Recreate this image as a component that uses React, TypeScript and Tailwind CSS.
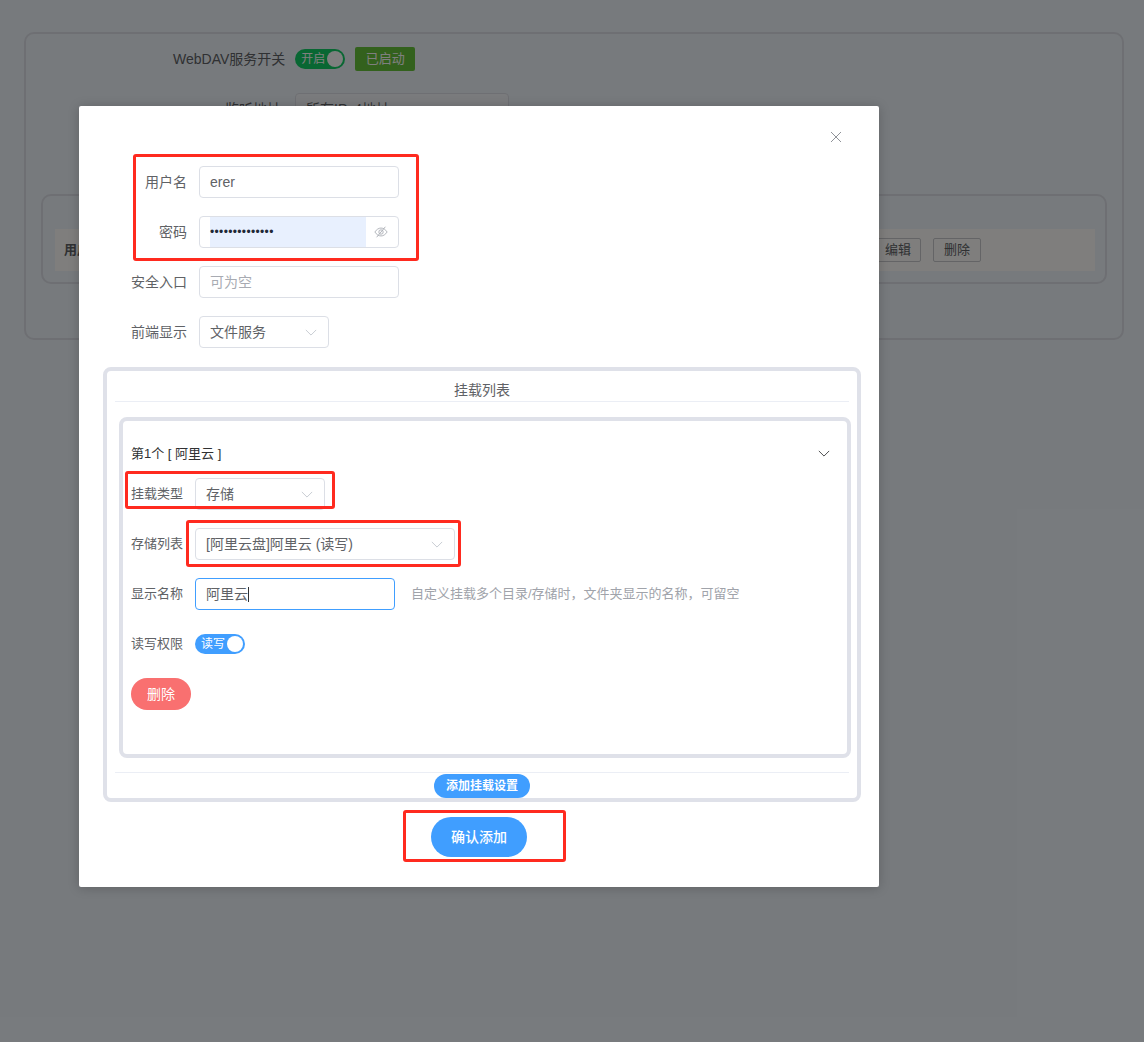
const FONT = "font-['Liberation_Sans','Noto_Sans_CJK_SC',sans-serif]";

const Chevron = ({ className = "" }: { className?: string }) => (
  <svg viewBox="0 0 14 8" className={"w-[12px] h-[7px] " + className} fill="none" stroke="currentColor" strokeWidth="1">
    <path d="M1 1l6 6 6-6" />
  </svg>
);

// red annotation drawn on top of the screenshot
const RedBox = ({ className }: { className: string }) => (
  <div className={"absolute border-[3px] border-[#ff2a1f] rounded-[3px] pointer-events-none " + className} />
);

const Switch = ({ label, color }: { label: string; color: string }) => (
  <div className={"w-[50px] h-[20px] rounded-full flex items-center pl-[6px] pr-[2px] justify-between text-[12px] text-white " + color}>
    <span>{label}</span>
    <span className="w-[16px] h-[16px] rounded-full bg-white" />
  </div>
);

const FormRow = ({ label, children }: { label: string; children: React.ReactNode }) => (
  <div className="flex items-center h-[32px] mb-[18px]">
    <label className="w-[96px] text-right pr-[12px] text-[14px] text-[#606266]">{label}</label>
    {children}
  </div>
);

const MountRow = ({ label, children, className = "" }: { label: string; children: React.ReactNode; className?: string }) => (
  <div className={"flex items-center h-[32px] " + className}>
    <label className="w-[64px] text-[13px] text-[#606266]">{label}</label>
    {children}
  </div>
);

const Select = ({ value, width }: { value: string; width: string }) => (
  <div className={"h-[32px] border border-[#dcdfe6] rounded-[4px] flex items-center justify-between pl-[10px] pr-[11px] text-[14px] text-[#606266] " + width}>
    <span>{value}</span>
    <Chevron className="text-[#c0c4cc]" />
  </div>
);

function Background() {
  return (
    <div className="pl-[24px] pt-[32px]">
      <div className="w-[1100px] h-[308px] border-2 border-[#dcdfe6] rounded-[10px] px-[15px]">
        <div className="flex items-center h-[50px] pl-[132px] text-[14px] text-[#606266]">
          <span className="mr-[10px]">WebDAV服务开关</span>
          <Switch label="开启" color="bg-[#13ce66]" />
          <span className="ml-[10px] w-[60px] h-[24px] rounded-[2px] bg-[#67c23a] text-white text-[13px] flex items-center justify-center">已启动</span>
        </div>
        <div className="flex items-center h-[32px] mt-[9px] pl-[184px] text-[14px] text-[#606266]">
          <span className="mr-[14px]">监听地址</span>
          <div className="w-[214px] h-[32px] border border-[#dcdfe6] bg-[#f5f7fa] rounded-[4px] pl-[10px] flex items-center">所有IPv4地址</div>
        </div>
        <div className="mt-[69px] h-[90px] border-2 border-[#dcdfe6] rounded-[10px] pl-[12px] pr-[10px] pt-[33px]">
          <div className="h-[42px] bg-[#fefdfb] flex items-center justify-between pl-[9px] pr-[114px] text-[13px] text-[#606266]">
            <b>用户名</b>
            <div className="flex gap-[12px]">
              <span className="w-[46px] h-[24px] border border-[#c8c9cc] rounded-[2px] flex items-center justify-center">编辑</span>
              <span className="w-[48px] h-[24px] border border-[#c8c9cc] rounded-[2px] flex items-center justify-center">删除</span>
            </div>
          </div>
        </div>
      </div>
    </div>
  );
}

function Dialog() {
  return (
    <div className="absolute left-[79px] top-[106px] w-[800px] h-[781px] bg-white rounded-[2px] shadow-[0_1px_12px_rgba(0,0,0,0.2)] pt-[60px] px-[24px] flex flex-col">
      <svg viewBox="0 0 12 12" className="absolute right-[37px] top-[25px] w-[12px] h-[12px] text-[#909399]" fill="none" stroke="currentColor" strokeWidth="1">
        <path d="M1 1l10 10M11 1L1 11" />
      </svg>

      <RedBox className="left-[54px] top-[48px] w-[286px] h-[107px]" />
      <RedBox className="left-[46px] top-[365px] w-[210px] h-[38px]" />
      <RedBox className="left-[107px] top-[414px] w-[275px] h-[47px]" />
      <RedBox className="left-[324px] top-[704px] w-[163px] h-[52px]" />

      <FormRow label="用户名">
        <div className="w-[200px] h-[32px] border border-[#dcdfe6] rounded-[4px] pl-[10px] flex items-center text-[14px] text-[#606266]">erer</div>
      </FormRow>
      <FormRow label="密码">
        <div className="w-[200px] h-[32px] border border-[#dcdfe6] rounded-[4px] flex items-center pl-[10px]">
          <div className="w-[156px] h-full bg-[#e8f0fe] flex items-center text-[12px] tracking-[0.35px] text-[#1f2937] leading-none">••••••••••••••</div>
          <svg viewBox="0 0 16 16" className="w-[14px] h-[14px] ml-[8px] text-[#a8abb2]" fill="none" stroke="currentColor" strokeWidth="1">
            <path d="M1 8c2-3 4.300-4.500 7-4.500S13 5 15 8c-2 3-4.300 4.500-7 4.500S3 11 1 8z" />
            <circle cx="8" cy="8" r="2.500" />
            <path d="M3 14L13 2" />
          </svg>
        </div>
      </FormRow>
      <FormRow label="安全入口">
        <div className="w-[200px] h-[32px] border border-[#dcdfe6] rounded-[4px] pl-[10px] flex items-center text-[14px] text-[#a8abb2]">可为空</div>
      </FormRow>
      <FormRow label="前端显示">
        <Select value="文件服务" width="w-[130px]" />
      </FormRow>

      <div className="mt-[1px] w-[758px] h-[435px] border-4 border-[#dfe1e9] rounded-[8px] px-[8px] pt-[8px]">
        <div className="h-[23px] text-center text-[14px] text-[#606266] border-b border-[#ebeef5] leading-[22px]">挂载列表</div>
        <div className="mt-[15px] h-[341px] w-[732px] ml-[4px] border-4 border-[#dfe1e9] rounded-[8px] px-[8px] pt-[16px] text-[#303133]">
          <div className="h-[41px] pb-[8px] flex items-center justify-between pr-[9px] text-[13px]">
            <span>第1个 [ 阿里云 ]</span>
            <Chevron className="text-[#303133] w-[10px] h-[6px]" />
          </div>
          <MountRow label="挂载类型">
            <Select value="存储" width="w-[130px]" />
          </MountRow>
          <MountRow label="存储列表" className="mt-[18px]">
            <Select value="[阿里云盘]阿里云 (读写)" width="w-[260px]" />
          </MountRow>
          <MountRow label="显示名称" className="mt-[18px]">
            <div className="w-[200px] h-[32px] border border-[#409eff] rounded-[4px] pl-[10px] flex items-center text-[14px] text-[#606266]">
              阿里云<span className="w-px h-[15px] bg-[#303133]" />
            </div>
            <span className="ml-[16px] text-[13px] text-[#a0a3aa]">自定义挂载多个目录/存储时，文件夹显示的名称，可留空</span>
          </MountRow>
          <MountRow label="读写权限" className="mt-[18px]">
            <Switch label="读写" color="bg-[#409eff]" />
          </MountRow>
          <div className="mt-[18px] w-[60px] h-[32px] rounded-full bg-[#f97070] text-white text-[14px] flex items-center justify-center">删除</div>
        </div>
        <div className="mt-[14px] border-t border-[#ebeef5] flex justify-center pt-[1px]">
          <div className="w-[96px] h-[24px] rounded-full bg-[#409eff] text-white text-[12px] font-bold flex items-center justify-center">添加挂载设置</div>
        </div>
      </div>

      <div className="w-[96px] h-[40px] mt-[15px] ml-[328px] rounded-full bg-[#409eff] text-white text-[14px] font-medium flex items-center justify-center">确认添加</div>
    </div>
  );
}

export default function App() {
  return (
    <div className={"relative w-[1144px] h-[1042px] bg-[#eff5fb] overflow-hidden " + FONT}>
      <Background />
      <div className="absolute inset-0 bg-black/50" />
      <Dialog />
    </div>
  );
}
